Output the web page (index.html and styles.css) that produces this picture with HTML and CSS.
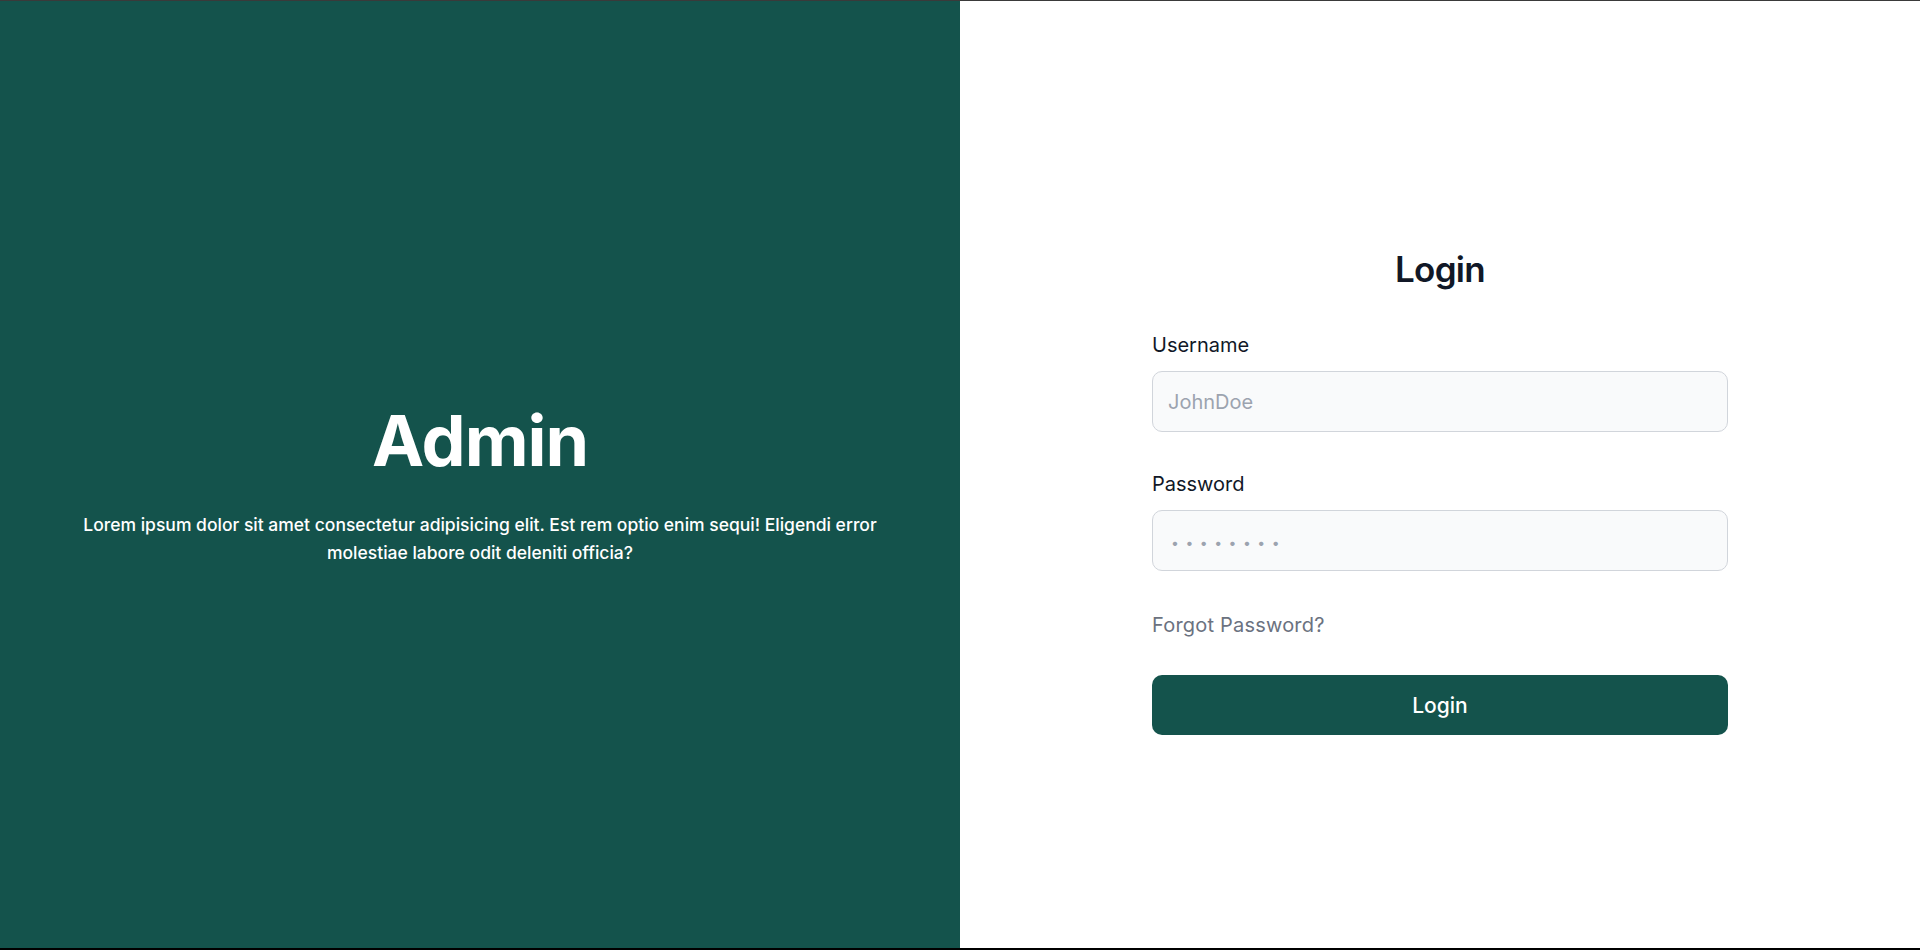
FILE: index.html
```html
<!DOCTYPE html>
<html lang="en">
<head>
<meta charset="utf-8">
<title>Admin Login</title>
<link rel="stylesheet" href="styles.css">
</head>
<body>
<main class="page">
  <section class="brand">
    <h1 class="brand-title">Admin</h1>
    <p class="brand-text">Lorem ipsum dolor sit amet consectetur adipisicing elit. Est rem optio enim sequi! Eligendi error molestiae labore odit deleniti officia?</p>
  </section>
  <section class="auth">
    <form class="login-form">
      <h2 class="login-title">Login</h2>
      <label class="field-label" for="username">Username</label>
      <input class="field-input" id="username" type="text" placeholder="JohnDoe">
      <label class="field-label" for="password">Password</label>
      <input class="field-input field-password" id="password" type="password" placeholder="••••••••">
      <a class="forgot" href="#">Forgot Password?</a>
      <button class="login-btn" type="button">Login</button>
    </form>
  </section>
</main>
</body>
</html>
```

FILE: styles.css
```css
* { box-sizing: border-box; }
html, body { margin: 0; padding: 0; }
body {
  font-family: Inter, "Noto Sans", "Liberation Sans", sans-serif;
  background: #ffffff;
  border-top: 1px solid #3a3a3a;
  border-bottom: 2px solid #000000;
  height: 950px;
  overflow: hidden;
}
.page {
  display: grid;
  grid-template-columns: 960px 960px;
  height: 947px;
}
.brand {
  background: #14534c;
  color: #ffffff;
  display: flex;
  flex-direction: column;
  align-items: center;
  justify-content: center;
  text-align: center;
  padding: 16px 40px 0 40px;
}
.brand-title {
  margin: 0;
  font-size: 70px;
  font-weight: 700;
  letter-spacing: -1px;
  line-height: 1.2;
}
.brand-text {
  margin: 28px 0 0 0;
  font-size: 17.5px;
  font-weight: 500;
  line-height: 28px;
  max-width: 820px;
}
.auth {
  display: flex;
  align-items: center;
  justify-content: center;
}
.login-form {
  width: 576px;
  display: flex;
  flex-direction: column;
  margin-top: 32px;
}
.login-title {
  margin: 0 0 40px 0;
  text-align: center;
  font-size: 35px;
  font-weight: 600;
  color: #111827;
  letter-spacing: -0.7px;
  line-height: 46px;
}
.field-label {
  font-size: 20px;
  color: #111827;
  line-height: 26px;
  margin-bottom: 13px;
}
.field-input {
  height: 61px;
  border: 1px solid #d1d5db;
  border-radius: 10px;
  background: #f9fafb;
  padding: 0 15px;
  font-family: inherit;
  font-size: 20px;
  color: #111827;
  margin-bottom: 39px;
  outline: none;
}
.field-input::placeholder { color: #9ca3af; }
.field-password::placeholder { letter-spacing: 6.5px; font-size: 14px; }
.field-password { padding-left: 18px; }
.forgot {
  font-size: 20px;
  letter-spacing: 0.2px;
  color: #6b7280;
  text-decoration: none;
  line-height: 26px;
  margin: 2px 0 0 0;
}
.login-btn {
  margin-top: 37px;
  height: 60px;
  border: none;
  border-radius: 10px;
  background: #14534c;
  color: #ffffff;
  font-family: inherit;
  font-size: 21px;
  font-weight: 500;
  cursor: pointer;
}
```
